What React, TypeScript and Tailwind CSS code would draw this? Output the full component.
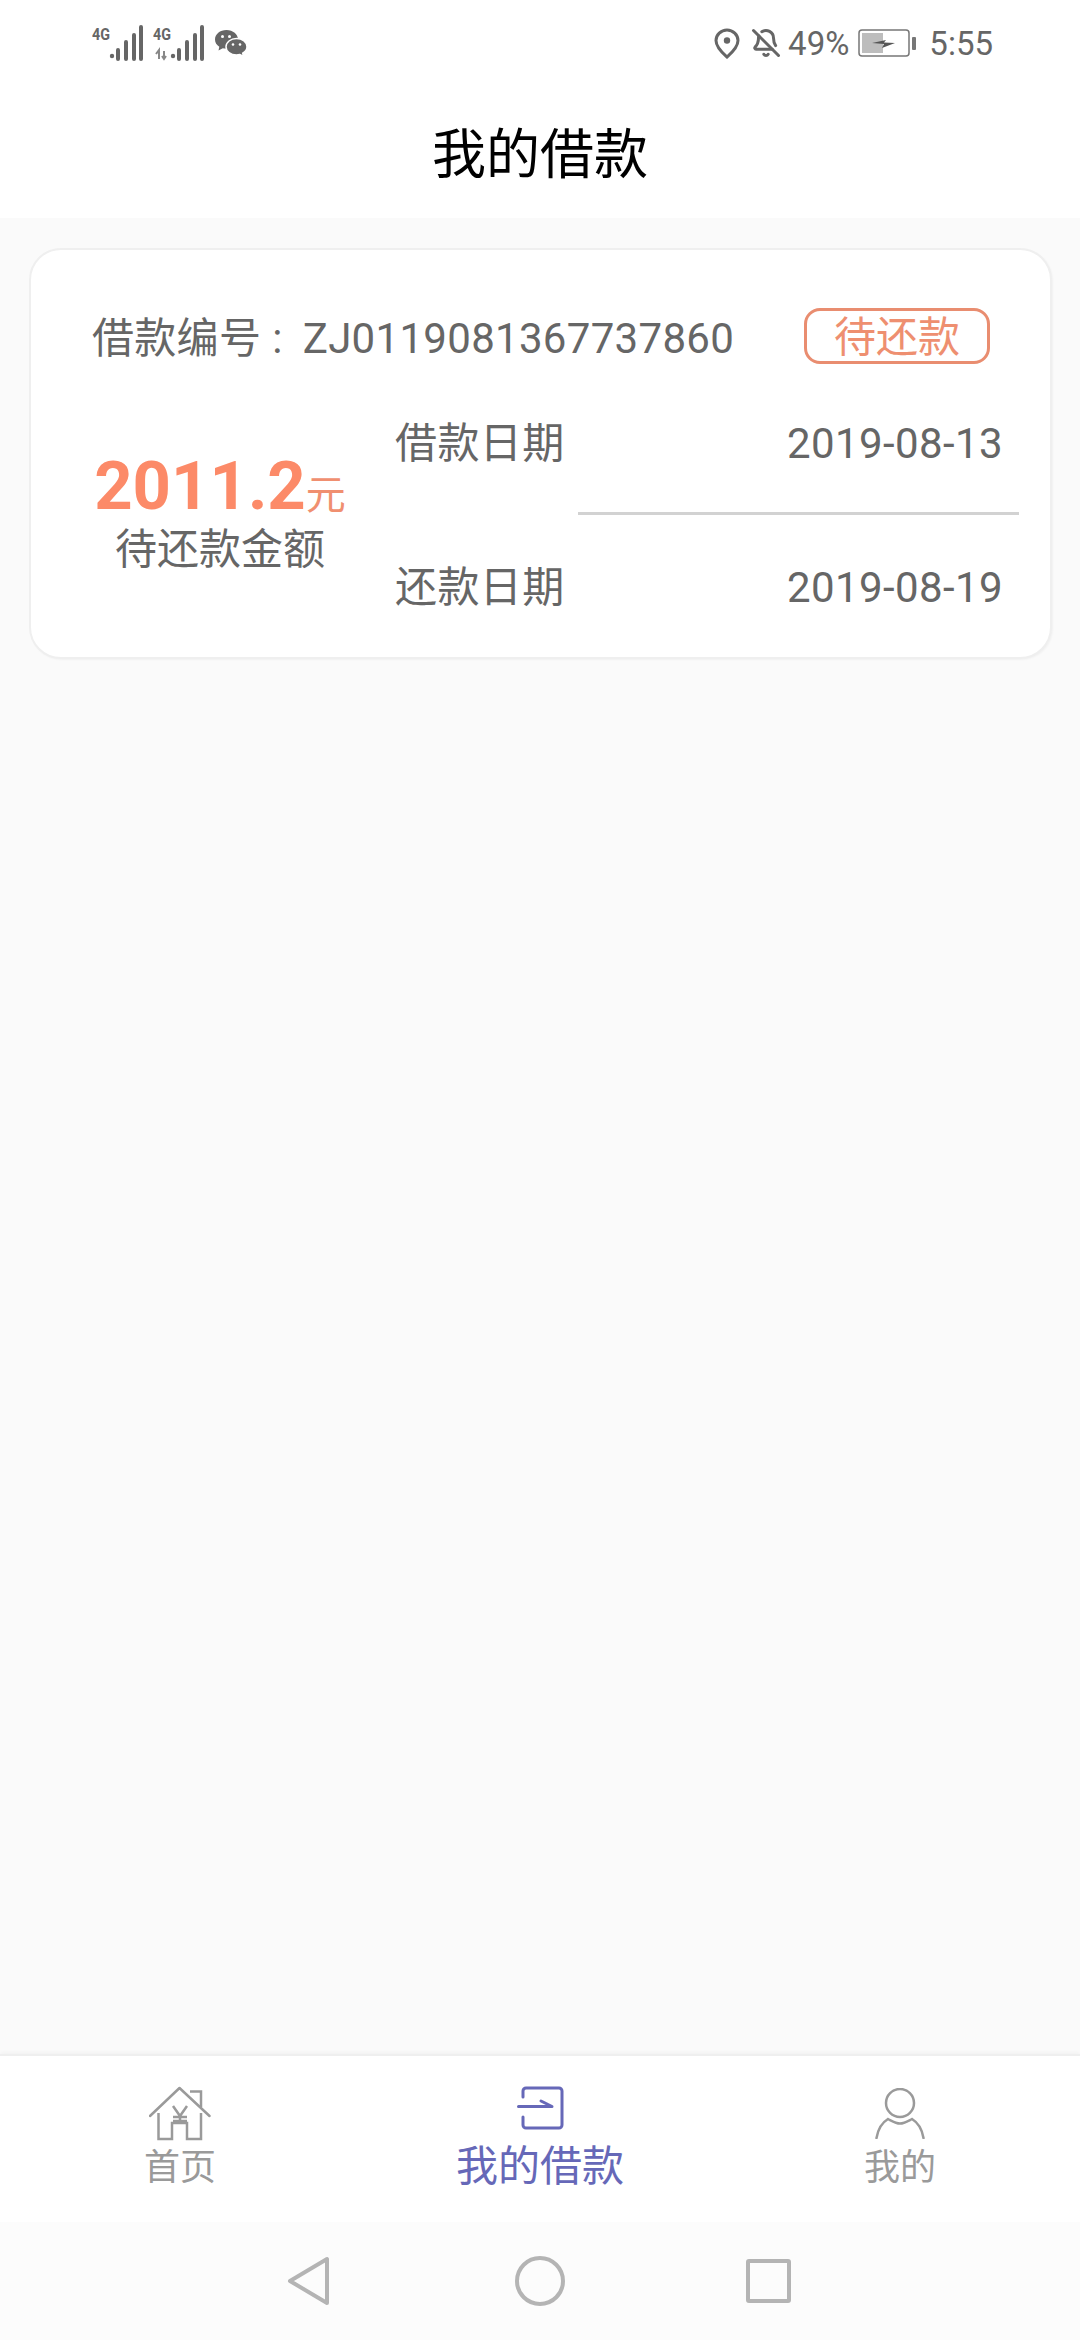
import { BellOff } from 'lucide-react'

function Signal({ sim2 }: { sim2?: boolean }) {
  return (
    <svg width="52" height="36" viewBox="0 0 52 36">
      <text x="0" y="15" fontSize="17" fontWeight="700" fontFamily="Roboto, sans-serif" fill="#666" textLength="18" lengthAdjust="spacingAndGlyphs">4G</text>
      {sim2 && <path d="M3 29 L6 25 V34 M11 26 V33 M9 31 L11 34 L13 31" stroke="#888" strokeWidth="2" fill="none" />}
      <circle cx="20" cy="31" r="2.2" fill="#666" />
      <path d="M27 34 V25 M35 34 V17 M43 34 V10 M50 34 V2" transform="translate(-1 0)" stroke="#666" strokeWidth="4" strokeLinecap="round" />
    </svg>
  )
}

function Wechat() {
  return (
    <svg width="34" height="28" viewBox="0 0 34 28">
      <path d="M12.500 1C6 1 1 5.200 1 10.500c0 3 1.700 5.600 4.300 7.300L4.500 21.500l4.300-2.200c1.200.3 2.400.5 3.700.5 6.500 0 11.500-4.200 11.500-9.300S19 1 12.500 1z" fill="#666" />
      <path d="M22.500 9.500c-6 0-10.500 3.800-10.500 8.300s4.500 8.200 10.500 8.200c1.200 0 2.300-.2 3.400-.5l3.600 2-.8-3.300c2.800-1.500 4.300-3.800 4.300-6.400 0-4.500-4.500-8.300-10.500-8.300z" fill="#666" stroke="#fff" strokeWidth="1.500" />
      <circle cx="8.500" cy="7.500" r="1.500" fill="#fff" />
      <circle cx="15.500" cy="7.500" r="1.500" fill="#fff" />
      <circle cx="19" cy="15.500" r="1.300" fill="#fff" />
      <circle cx="26" cy="15.500" r="1.300" fill="#fff" />
    </svg>
  )
}

function Pin() {
  return (
    <svg width="26" height="31" viewBox="0 0 26 31">
      <path d="M13 2C7 2 2 6.800 2 12.500 2 19.500 9 25.500 13 29c4-3.500 11-9.500 11-16.500C24 6.800 19 2 13 2z" fill="none" stroke="#666" strokeWidth="3" />
      <circle cx="13" cy="12.500" r="3.200" fill="#666" />
    </svg>
  )
}

function Battery() {
  return (
    <svg width="58" height="28" viewBox="0 0 58 28">
      <rect x="1" y="1" width="50" height="26" rx="3" fill="none" stroke="#777" strokeWidth="1.500" />
      <rect x="4" y="4" width="21" height="20" fill="#bdbdbd" />
      <path d="M14 14 L28 11 L26 13.500 L37 14 L24 19 L26 15z" fill="#555" />
      <rect x="54" y="8" width="4" height="13" rx="1" fill="#777" />
    </svg>
  )
}

function HomeIcon() {
  return (
    <svg width="62" height="56" viewBox="0 0 62 56" fill="none" stroke="#9a9a9a" strokeWidth="2.500">
      <path d="M1 30 L30.500 2 L60.500 30" strokeLinecap="round" strokeLinejoin="round" />
      <path d="M41 5.500 H52 V21" />
      <path d="M9.500 27 V53 H23 V37 H38 V53 H52 V27" />
      <path d="M24 20 L31 30 L38 20 M31 30 V38 M24 31 H38 M24 35 H38" />
    </svg>
  )
}

function LoanIcon() {
  return (
    <svg width="47" height="44" viewBox="0 0 47 44" fill="none" stroke="#6668b8" strokeWidth="3" strokeLinecap="round" strokeLinejoin="round">
      <path d="M6 11 V5 a3 3 0 0 1 3-3 H42 a3 3 0 0 1 3 3 V39 a3 3 0 0 1-3 3 H9 a3 3 0 0 1-3-3 V31" />
      <path d="M1.500 20.500 H35 L24 15" />
    </svg>
  )
}

function MeIcon() {
  return (
    <svg width="50" height="51" viewBox="0 0 50 51" fill="none" stroke="#9a9a9a" strokeWidth="2.500" strokeLinecap="round">
      <circle cx="25" cy="15" r="14" />
      <path d="M1.500 50 C3 41 8 34 13 31 C17 33 21 35.500 25 35.500 C29 35.500 33 33 37 31 C42 34 47 41 48.500 50" />
    </svg>
  )
}

export default function App() {
  return (
    <div className="flex flex-col h-[2340px] w-[1080px] overflow-hidden bg-[#fafafa] font-['Roboto','Noto_Sans_CJK_SC',sans-serif] text-[#666666]">
      {/* Status bar + title */}
      <div className="bg-white h-[218px] shrink-0">
        <div className="flex items-center justify-between h-[86px] pl-[92px] pr-[87px]">
          <div className="flex items-center gap-[9px]">
            <Signal />
            <Signal sim2 />
            <Wechat />
          </div>
          <div className="flex items-center text-[33px] leading-none">
            <Pin />
            <BellOff size={30} strokeWidth={2.4} className="ml-[11px] mr-[7px]" />
            <span>49%</span>
            <span className="ml-[9px] mr-[13px]"><Battery /></span>
            <span>5:55</span>
          </div>
        </div>
        <h1 className="text-center text-[54px] leading-[64px] text-black font-normal mt-[38px]">我的借款</h1>
      </div>

      {/* Loan card */}
      <div className="flex-1 pl-[29px] pr-[28px] pt-[30px]">
        <div className="h-[411px] bg-white border-2 border-[#efefef] rounded-[32px] shadow-[1px_1px_2px_rgba(0,0,0,0.04)] pt-[58px] pr-[31px]">
          <div className="flex items-center justify-between h-[56px] pl-[61px] pr-[29px]">
            <span className="text-[42px] leading-none tracking-[0.3px] mt-[5px]">借款编号<span className="ml-[11px] mr-[20px]">:</span>ZJ0119081367737860</span>
            <span className="flex items-center justify-center w-[186px] h-[56px] border-[3px] border-[#e98d70] rounded-[16px] text-[42px] text-[#ee8f70] pt-[3px]">待还款</span>
          </div>
          <div className="flex mt-[10px] pl-[61px]">
            <div className="w-[256px] shrink-0 flex flex-col items-center justify-center pb-[6px]">
              <div className="flex items-baseline">
                <span className="text-[67px] font-bold text-[#fc8a68] leading-[62px]">2011.2</span>
                <span className="text-[40px] leading-[62px] text-[#f08f70]">元</span>
              </div>
              <span className="text-[42px] leading-[46px]">待还款金额</span>
            </div>
            <div className="flex-1 ml-[47px]">
              <div className="flex justify-between items-center h-[138px] pr-[16px] text-[42px] tracking-[0.4px]">
                <span>借款日期</span>
                <span>2019-08-13</span>
              </div>
              <div className="h-[3px] ml-[183px] bg-[#d2d2d2]" />
              <div className="flex justify-between items-center h-[144px] pr-[16px] text-[42px] tracking-[0.4px]">
                <span>还款日期</span>
                <span>2019-08-19</span>
              </div>
            </div>
          </div>
        </div>
      </div>

      {/* Bottom tabs */}
      <div className="grid grid-cols-3 h-[168px] shrink-0 bg-white border-t-2 border-[#efefef] shadow-[0_-2px_4px_rgba(0,0,0,0.03)] pt-[30px] text-[#9a9a9a]">
        <div className="flex flex-col items-center text-[36px] leading-[44px] gap-[4px]">
          <HomeIcon />
          <span>首页</span>
        </div>
        <div className="flex flex-col items-center text-[42px] leading-[50px] text-[#6668b8] gap-[12px]">
          <LoanIcon />
          <span>我的借款</span>
        </div>
        <div className="flex flex-col items-center text-[36px] leading-[44px] gap-[7px] pt-[2px]">
          <MeIcon />
          <span>我的</span>
        </div>
      </div>

      {/* Android nav */}
      <div className="flex items-center h-[118px] shrink-0 bg-[#fcfcfc] pl-[287px]">
        <svg width="44" height="50" viewBox="0 0 44 50" fill="none" stroke="#b4b4b4" strokeWidth="4" strokeLinejoin="round"><path d="M40 3 V47 L3 25z" /></svg>
        <svg className="ml-[184px] mr-[181px]" width="50" height="50" viewBox="0 0 50 50" fill="none" stroke="#b4b4b4" strokeWidth="4"><circle cx="25" cy="25" r="23" /></svg>
        <svg width="45" height="44" viewBox="0 0 45 44" fill="none" stroke="#b4b4b4" strokeWidth="4" strokeLinejoin="round"><rect x="2" y="2" width="41" height="40" rx="1" /></svg>
      </div>
    </div>
  )
}
